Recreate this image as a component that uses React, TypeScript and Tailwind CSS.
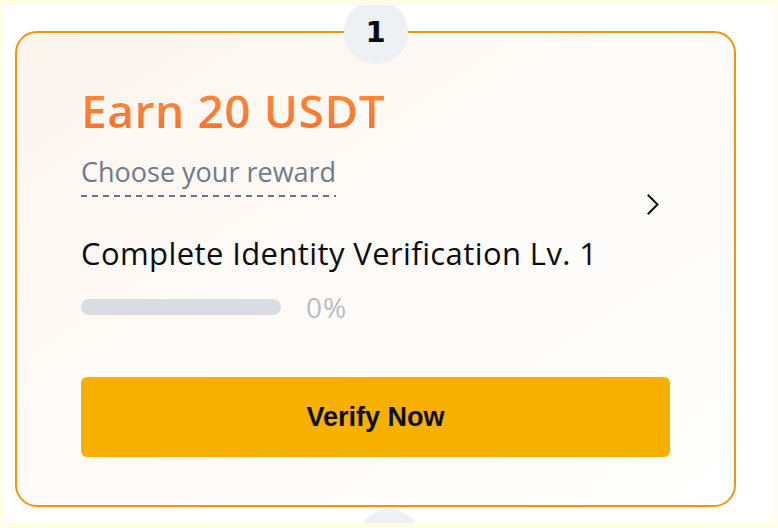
import React from 'react';

const task = {
  step: 1,
  reward: 'Earn 20 USDT',
  title: 'Complete Identity Verification Lv. 1',
  progress: 0,
  action: 'Verify Now',
};

const Chevron = () => (
  <svg width="12" height="21" viewBox="0 0 12 21" fill="none" className="shrink-0 mr-[11px] mt-[6px]">
    <path d="M1.5 1.5 L10.5 10.5 L1.5 19.5" stroke="#0b0e11" strokeWidth="2" strokeLinecap="square" />
  </svg>
);

const App = () => {
  return (
    <div className="w-[778px] h-[528px] bg-[#fffde7] pt-[5px] pl-[4px] pr-[5px] pb-[5px] font-['Open_Sans',sans-serif]">
      <div className="w-full h-full bg-white overflow-hidden relative">
        <div className="flex flex-col gap-[2px] pt-[26px] pl-[11px]">
          <div className="relative w-[721px] shrink-0 rounded-[22px] border-2 border-[#f0960e] bg-gradient-to-br from-[#fdf5ee] via-[#fefbf8] to-white px-[64px] pt-[54px] pb-[48px]">
            {/* step badge */}
            <div className="absolute -top-[33px] left-1/2 -translate-x-1/2 w-16 h-16 rounded-full bg-[#eff0f3] flex items-center justify-center">
              <span className="font-['DejaVu_Sans',sans-serif] font-bold text-[29px] leading-none text-[#0b0e11]">{task.step}</span>
            </div>

            <div className="flex items-center">
              <div className="flex-1 flex flex-col items-start">
                <h2 className="font-semibold text-[46px] leading-[46px] tracking-[0.6px] bg-gradient-to-b from-[#ff8c3a] to-[#f6722e] bg-clip-text text-transparent">
                  {task.reward}
                </h2>
                <div className="mt-[25px] inline-flex flex-col">
                  <span className="text-[27px] leading-[27px] text-[#707a8a]">Choose your reward</span>
                  <div className="mt-[10px] h-[2px] w-full bg-[repeating-linear-gradient(to_right,#6b7482_0px,#6b7482_6px,transparent_6px,transparent_11px)]"></div>
                </div>
                <p className="mt-[41px] font-medium text-[31px] leading-[31px] tracking-[0.4px] text-[#0b0e11]">{task.title}</p>
                <div className="mt-[30px] h-4 flex items-center">
                  <div className="w-[200px] h-4 rounded-full bg-[#d9dde2]">
                    <div className="h-4 rounded-full bg-[#f8b000]" style={{ width: `${task.progress}%` }}></div>
                  </div>
                  <span className="ml-[25px] text-[28px] leading-none tracking-[1px] text-[#b7bdc6]">{task.progress}%</span>
                </div>
              </div>
              <Chevron />
            </div>

            <button className="mt-[62px] w-full h-[80px] rounded-md bg-[#f8b000] font-['Liberation_Sans',sans-serif] font-bold text-[27px] text-[#0b0e11]">
              {task.action}
            </button>
          </div>
          {/* next step badge peeking in */}
          <div className="self-center -ml-[11px] w-16 h-16 shrink-0 rounded-full bg-[#eff0f3]"></div>
        </div>
      </div>
    </div>
  );
};

export default App;
